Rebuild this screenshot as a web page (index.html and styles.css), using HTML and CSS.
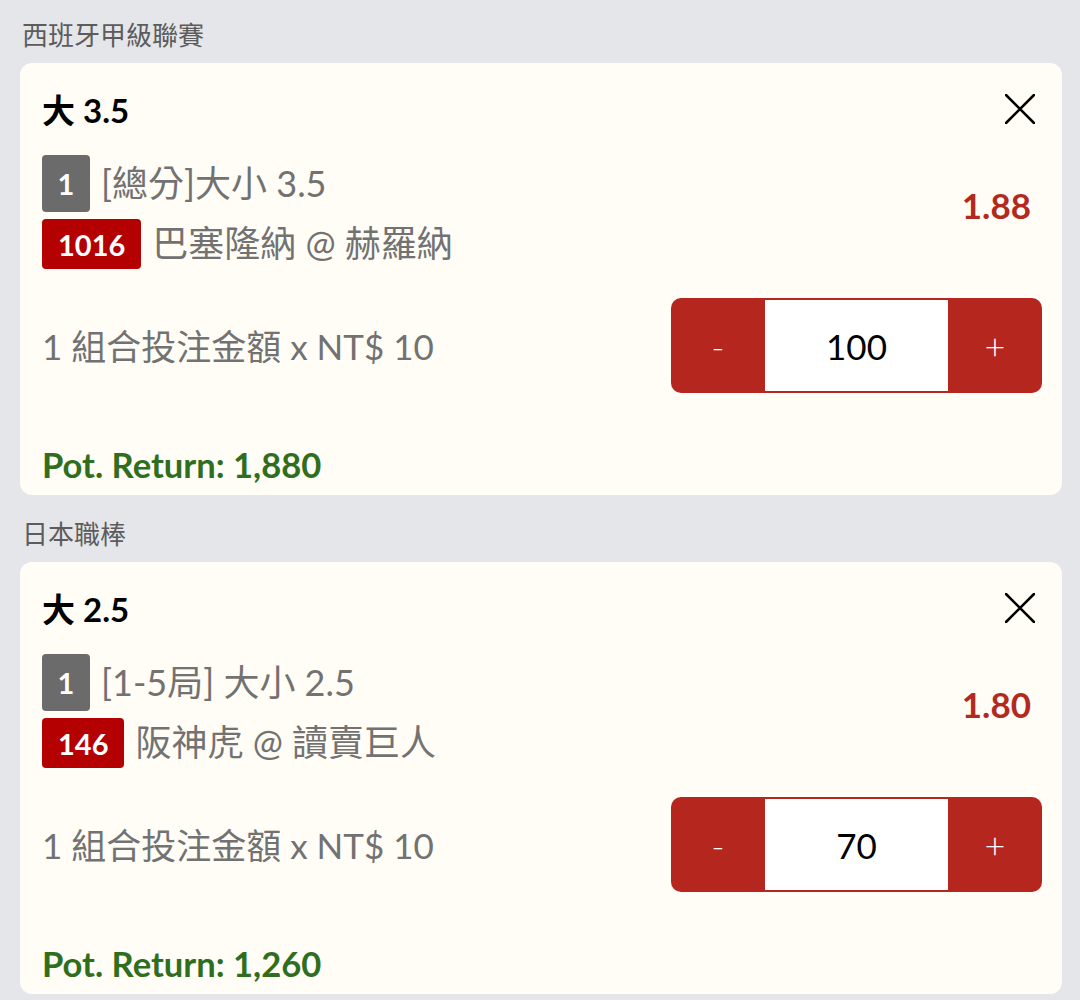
FILE: index.html
```html
<!DOCTYPE html>
<html lang="zh-Hant">
  <head>
    <meta charset="UTF-8" />
    <meta name="viewport" content="width=device-width, initial-scale=1" />
    <title>投注單</title>
    <link rel="stylesheet" href="styles.css">
  </head>
  <body>
    <!-- 西班牙甲級聯賽 -->
    <section class="league">
      <div class="league-name">西班牙甲級聯賽</div>
      <div class="bet-card">
        <div class="bet-head">
          <div class="bet-title">大 3.5</div>
          <button class="btn-close" aria-label="關閉">
            <svg width="30" height="30" viewBox="0 0 30 30">
              <path d="M1 1 L29 29 M29 1 L1 29" stroke="#000" stroke-width="2.6" stroke-linecap="round" fill="none" />
            </svg>
          </button>
        </div>

        <div class="bet-info">
          <div class="bet-lines">
            <div class="bet-line">
              <span class="tag tag-gray">1</span>
              <span class="bet-text">[總分]大小 3.5</span>
            </div>
            <div class="bet-line">
              <span class="tag tag-red">1016</span>
              <span class="bet-text">巴塞隆納 @ 赫羅納</span>
            </div>
          </div>
          <div class="bet-odds">1.88</div>
        </div>

        <div class="stake-row">
          <div class="stake-label">1 組合投注金額 x NT$ 10</div>
          <div class="stepper">
            <button class="step-btn">-</button>
            <div class="step-value">100</div>
            <button class="step-btn">+</button>
          </div>
        </div>

        <div class="pot-return">Pot. Return: 1,880</div>
      </div>
    </section>

    <!-- 日本職棒 -->
    <section class="league">
      <div class="league-name">日本職棒</div>
      <div class="bet-card">
        <div class="bet-head">
          <div class="bet-title">大 2.5</div>
          <button class="btn-close" aria-label="關閉">
            <svg width="30" height="30" viewBox="0 0 30 30">
              <path d="M1 1 L29 29 M29 1 L1 29" stroke="#000" stroke-width="2.6" stroke-linecap="round" fill="none" />
            </svg>
          </button>
        </div>

        <div class="bet-info">
          <div class="bet-lines">
            <div class="bet-line">
              <span class="tag tag-gray">1</span>
              <span class="bet-text">[1-5局] 大小 2.5</span>
            </div>
            <div class="bet-line">
              <span class="tag tag-red">146</span>
              <span class="bet-text">阪神虎 @ 讀賣巨人</span>
            </div>
          </div>
          <div class="bet-odds">1.80</div>
        </div>

        <div class="stake-row">
          <div class="stake-label">1 組合投注金額 x NT$ 10</div>
          <div class="stepper">
            <button class="step-btn">-</button>
            <div class="step-value">70</div>
            <button class="step-btn">+</button>
          </div>
        </div>

        <div class="pot-return">Pot. Return: 1,260</div>
      </div>
    </section>
  </body>
</html>
```

FILE: styles.css
```css
body {
  margin: 0;
  background-color: #e5e6e9;
  font-family: Lato, "Noto Sans CJK TC", sans-serif;
  color: #707070;
}

.league-name {
  font-size: 26px;
  line-height: 36px;
  color: #5c5c5c;
  padding: 17px 0 10px 22px;
}

.bet-card {
  background-color: #fffdf5;
  border-radius: 12px;
  margin: 0 18px 4px 20px;
  padding: 20px 20px 10px 22px;
}

.bet-head {
  display: flex;
  align-items: center;
  justify-content: space-between;
  height: 56px;
}

.bet-title {
  font-size: 33px;
  font-weight: bold;
  color: #000;
  line-height: 1.2;
}

.btn-close {
  background: none;
  border: none;
  padding: 0;
  margin: -4px 7px 0 0;
  width: 30px;
  height: 30px;
  cursor: pointer;
}

.bet-info {
  display: flex;
  align-items: center;
  justify-content: space-between;
  margin-top: 16px;
}

.bet-lines {
  display: flex;
  flex-direction: column;
  gap: 7px;
}

.bet-line {
  display: flex;
  align-items: center;
}

.tag {
  display: flex;
  align-items: center;
  justify-content: center;
  color: #fff;
  font-weight: bold;
  font-size: 29px;
  border-radius: 4px;
}

.tag-gray {
  background-color: #6b6b6b;
  width: 48px;
  height: 57px;
}

.tag-red {
  background-color: #b40000;
  height: 50px;
  padding: 0 16px;
}

.bet-text {
  font-size: 36px;
  line-height: 1.2;
  margin-left: 11px;
  color: #727272;
}

.bet-odds {
  font-size: 35px;
  font-weight: bold;
  color: #b22a1f;
  margin: -14px 11px 0 0;
}

.stake-row {
  display: flex;
  align-items: center;
  justify-content: space-between;
  margin-top: 29px;
}

.stake-label {
  font-size: 35px;
  line-height: 1.2;
  color: #727272;
}

.stepper {
  display: flex;
  width: 371px;
  height: 95px;
  background-color: #b5271e;
  border-radius: 10px;
  overflow: hidden;
}

.step-btn {
  width: 94px;
  background: none;
  border: none;
  color: #fff;
  font-family: Lato, sans-serif;
  font-size: 36px;
  font-weight: 300;
  cursor: pointer;
}

.step-value {
  flex: 1;
  margin: 2px 0;
  background-color: #fff;
  color: #000;
  font-size: 35px;
  display: flex;
  align-items: center;
  justify-content: center;
}

.pot-return {
  margin-top: 52px;
  line-height: 40px;
  font-size: 34.6px;
  font-weight: bold;
  color: #2f6e1f;
}
```
